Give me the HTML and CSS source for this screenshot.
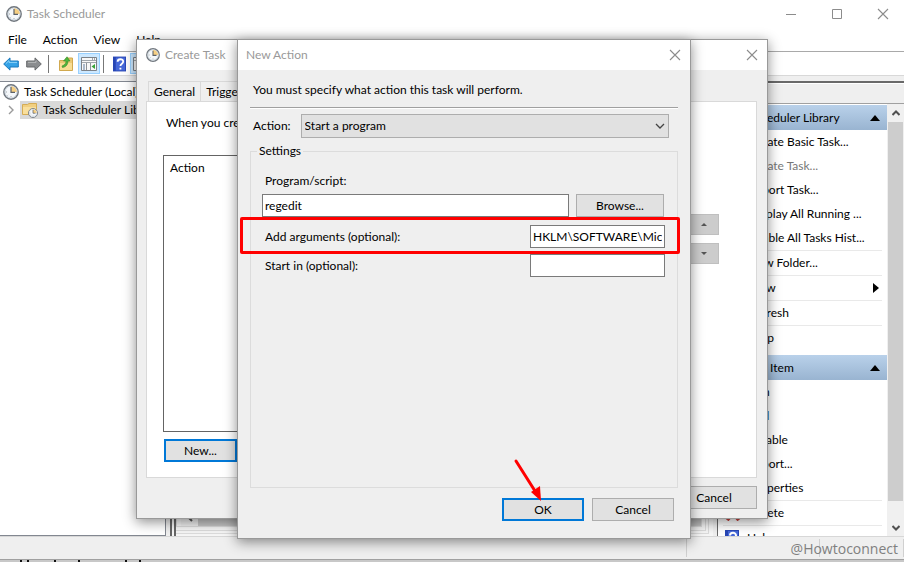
FILE: index.html
```html
<!DOCTYPE html>
<html lang="en">
<head>
    <meta charset="UTF-8">
    <meta name="viewport" content="width=device-width, initial-scale=1.0">
    <title>Task Scheduler</title>
    <link rel="stylesheet" href="styles.css">
</head>
<body>
    <svg class="defs" width="0" height="0" aria-hidden="true">
        <symbol id="clock" viewBox="0 0 16 16">
            <circle cx="8" cy="8" r="7.2" fill="#e4ecf3" stroke="#70767d" stroke-width="1.4"/>
            <circle cx="8" cy="8" r="5.9" fill="#f5f8fb" stroke="#bac5ce" stroke-width=".6"/>
            <path d="M8 8V2.2A5.8 5.8 0 0 1 13.8 8Z" fill="#f6cf83"/>
            <path d="M8 3v5.4h4" fill="none" stroke="#5c6269" stroke-width="1.2"/>
            <path d="M3 8h1M8 12v1M4.5 11.5l.6-.6" stroke="#8d949a" stroke-width=".8"/>
        </symbol>
        <symbol id="close" viewBox="0 0 12 12">
            <path d="M1 1l10 10M11 1L1 11" fill="none" stroke="#8c8c8c" stroke-width="1.1"/>
        </symbol>
        <symbol id="help" viewBox="0 0 14 16">
            <path d="M0 0h14v16H0z" fill="#2846b4"/>
            <path d="M3 1h10v14H3z" fill="#4668d8"/>
            <path d="M5 5.5C5 2 11 2 11 5.4 11 7.8 8 7.6 8 10.2M8 12v2" fill="none" stroke="#fff" stroke-width="2"/>
        </symbol>
    </svg>

    <main class="window">
        <header class="titlebar">
            <svg class="icon16"><use href="#clock"/></svg>
            <h1>Task Scheduler</h1>
            <div class="window-buttons">
                <button aria-label="Minimize"><svg width="12" height="12"><path d="M1 6.5h10" stroke="#8c8c8c"/></svg></button>
                <button aria-label="Maximize"><svg width="12" height="12"><path d="M1.5 1.5h9v9h-9z" fill="none" stroke="#8c8c8c"/></svg></button>
                <button aria-label="Close"><svg width="12" height="12"><use href="#close"/></svg></button>
            </div>
        </header>
        <nav class="menubar">
            <a href="#">File</a>
            <a href="#">Action</a>
            <a href="#">View</a>
            <a href="#">Help</a>
        </nav>
        <div class="toolbar">
            <button aria-label="Back"><svg width="16" height="14"><path d="M.7 7L7 .9V4h8.3v6H7v3.1z" fill="#35a2e6" stroke="#1878bd"/><path d="M3 6.5L6 3.6V5.4h8" fill="none" stroke="#8dd3f8"/></svg></button>
            <button aria-label="Forward"><svg width="16" height="14"><path d="M15.3 7L9 .9V4H.7v6H9v3.1z" fill="#8b8d8f" stroke="#66686a"/><path d="M2 5.4h8V3.6" fill="none" stroke="#b5b7b8"/></svg></button>
            <span class="divider"></span>
            <button aria-label="Up one level"><svg width="16" height="16"><path d="M1.5 4.5h7l1-2.5h5v12.5h-13z" fill="#ecc974" stroke="#d1a94f"/><path d="M2 7h12v7H2z" fill="#f8dd94"/><path d="M4 10C7 9 8 7 8 5H5.5L9 .8 12 5h-2c0 3.5-2 6-5.500 6.500z" fill="#4fb53c" stroke="#358a27" stroke-width=".6"/></svg></button>
            <button class="pressed" aria-label="Show console tree"><svg width="16" height="14"><path d="M.5 .5h15v13H.5z" fill="#f8f8f8" stroke="#7d8288"/><path d="M1 3.500h14M1 5.500h14" stroke="#a1a7ad"/><path d="M11 2h1M13 2h1" stroke="#46505a"/><path d="M5.500 6v7M9.500 6v7" stroke="#8d9298"/><path d="M2 8h2M2 10h2M2 12h2" stroke="#5e7ca0"/><path d="M14 7v5L10.500 9.500z" fill="#36a336"/></svg></button>
            <span class="divider"></span>
            <button aria-label="Help"><svg width="13" height="16"><use href="#help"/></svg></button>
            <button class="pressed" aria-label="Show action pane"><svg width="16" height="14"><path d="M.5 .5h15v13H.5z" fill="#f8f8f8" stroke="#7d8288"/><path d="M1 3.500h14" stroke="#a1a7ad"/></svg></button>
        </div>

        <div class="panes">
            <section class="tree">
                <div class="tree-row"><svg class="icon16"><use href="#clock"/></svg><span>Task Scheduler (Local)</span></div>
                <div class="tree-row child">
                    <svg class="chevron" width="6" height="10"><path d="M1 1l4 4-4 4" fill="none" stroke="#9a9a9a" stroke-width="1.4"/></svg>
                    <div class="selected">
                        <svg width="16" height="16"><path d="M.5 2.500h5l1.500-1h7.500v11H.5z" fill="#f1cf80" stroke="#d5ac55"/><path d="M1 5h13v7H1z" fill="#f9df9c"/><svg x="6" y="6" width="10" height="10"><use href="#clock"/></svg></svg>
                        <span>Task Scheduler Library</span>
                    </div>
                </div>
            </section>

            <section class="results">
                <div class="results-frame">
                    <div class="results-inner">
                        <div class="hscroll">
                            <button aria-label="Scroll left"><svg width="8" height="10"><path d="M6 1L2 5l4 4" fill="none" stroke="#555" stroke-width="2"/></svg></button>
                            <span class="hthumb"></span>
                        </div>
                    </div>
                </div>
            </section>

            <aside class="actions">
                <div class="actions-title"></div>
                <div class="actions-body">
                    <div class="actions-list">
                        <h2>Task Scheduler Library <svg width="10" height="6"><path d="M0 6l5-6 5 6z"/></svg></h2>
                        <a href="#">Create Basic Task...</a>
                        <a href="#" class="disabled">Create Task...</a>
                        <a href="#">Import Task...</a>
                        <a href="#">Display All Running ...</a>
                        <a href="#">Enable All Tasks Hist...</a>
                        <a href="#" class="split">New Folder...</a>
                        <a href="#" class="split">View <svg width="6" height="10"><path d="M0 0l6 5-6 5z"/></svg></a>
                        <a href="#" class="split">Refresh</a>
                        <a href="#" class="split">Help</a>
                        <h2 class="second">Selected Item <svg width="10" height="6"><path d="M0 6l5-6 5 6z"/></svg></h2>
                        <a href="#">Run</a>
                        <a href="#">End</a>
                        <a href="#">Disable</a>
                        <a href="#">Export...</a>
                        <a href="#">Properties</a>
                        <a href="#" class="split with-icon"><svg width="16" height="16"><path d="M2 1l12 14M14 1L2 15" stroke="#c8403c" stroke-width="4"/></svg>Delete</a>
                        <a href="#" class="split with-icon"><svg width="14" height="16"><use href="#help"/></svg>Help</a>
                    </div>
                    <div class="vscroll">
                        <button aria-label="Scroll up"><svg width="8" height="6"><path d="M.5 5L4 1.500 7.500 5" fill="none" stroke="#505050" stroke-width="2"/></svg></button>
                        <span class="vthumb"></span>
                        <button class="down" aria-label="Scroll down"><svg width="8" height="6"><path d="M.5 1L4 4.500 7.500 1" fill="none" stroke="#505050" stroke-width="2"/></svg></button>
                    </div>
                </div>
            </aside>
        </div>

        <footer class="statusbar">
            <span class="cell main-cell"></span>
            <span class="cell"></span>
            <span class="cell last"></span>
            <span class="watermark">@Howtoconnect</span>
        </footer>
        <svg class="page-edge" height="2"><path d="M20 1h2M27 1h2M54 1h2M78 1h2M125 1h2M139 1h2" stroke="#111" stroke-width="2"/></svg>
    </main>

    <section class="dialog create-task">
        <header class="titlebar">
            <svg class="icon14"><use href="#clock"/></svg>
            <h1>Create Task</h1>
            <button aria-label="Close"><svg width="12" height="12"><use href="#close"/></svg></button>
        </header>
        <div class="tabs">
            <button class="tab">General</button>
            <button class="tab">Triggers</button>
            <button class="tab active">Actions</button>
        </div>
        <div class="tab-page">
            <p>When you create a task, you must specify the action that will occur when your task starts.</p>
            <div class="list-row">
                <div class="action-list">Action</div>
                <div class="order">
                    <button disabled aria-label="Move up"><svg width="6" height="3"><path d="M0 3l3-3 3 3z"/></svg></button>
                    <button disabled aria-label="Move down"><svg width="6" height="3"><path d="M0 0l3 3 3-3z"/></svg></button>
                </div>
            </div>
            <button class="btn default new">New...</button>
        </div>
        <div class="dialog-buttons">
            <button class="btn">Cancel</button>
        </div>
    </section>

    <section class="dialog new-action">
        <header class="titlebar">
            <h1>New Action</h1>
            <button aria-label="Close"><svg width="12" height="12"><use href="#close"/></svg></button>
        </header>
        <form class="form">
            <p>You must specify what action this task will perform.</p>
            <hr>
            <div class="action-row">
                <label for="action">Action:</label>
                <div class="select-wrap">
                    <select id="action">
                        <option>Start a program</option>
                    </select>
                    <svg width="10" height="6"><path d="M1 1l4 4 4-4" fill="none" stroke="#444" stroke-width="1.300"/></svg>
                </div>
            </div>
            <fieldset>
                <legend>Settings</legend>
                <label for="program">Program/script:</label>
                <div class="program-row">
                    <input type="text" id="program" value="regedit">
                    <button type="button" class="btn">Browse...</button>
                </div>
                <div class="field">
                    <label for="args">Add arguments (optional):</label>
                    <input type="text" id="args" value="HKLM\SOFTWARE\Microsoft">
                </div>
                <div class="field">
                    <label for="startin">Start in (optional):</label>
                    <input type="text" id="startin">
                </div>
            </fieldset>
            <div class="dialog-buttons">
                <button type="button" class="btn default">OK</button>
                <button type="button" class="btn">Cancel</button>
            </div>
        </form>
        <div class="highlight"></div>
        <svg class="arrow" width="32" height="46"><path d="M3 4l19 30" stroke="#f00" stroke-width="3" stroke-linecap="round"/><path d="M28 44l-10-9 9-6z" fill="#f00"/></svg>
    </section>
</body>
</html>
```
FILE: styles.css
```css
* {
    box-sizing: border-box;
}
body {
    margin: 0;
    height: 100vh;
    overflow: hidden;
    font: 12px/16px Lato, "Open Sans", sans-serif;
    color: #000;
    background: #fff;
}
h1, h2, p {
    margin: 0;
    font-size: 12px;
    font-weight: normal;
}
button, input, select {
    font: inherit;
    color: inherit;
}
button {
    padding: 0;
    border: 0;
    background: none;
}
a {
    color: inherit;
    text-decoration: none;
}
svg {
    flex: none;
}
.defs {
    position: absolute;
}
.icon16 {
    width: 16px;
    height: 16px;
}
.icon14 {
    width: 14px;
    height: 14px;
}

/* main window */
.window {
    display: flex;
    flex-direction: column;
    height: 100%;
    background: #efefef;
}
.titlebar {
    display: flex;
    align-items: center;
    flex: none;
    height: 28px;
    gap: 5px;
    padding: 0 6px;
    background: #fff;
}
.titlebar h1 {
    color: #999;
}
.titlebar button {
    display: flex;
    margin-left: auto;
}
.window-buttons {
    display: flex;
    gap: 34px;
    margin-left: auto;
    padding-right: 9px;
}
.menubar {
    display: flex;
    align-items: center;
    flex: none;
    height: 23px;
    gap: 16px;
    padding-left: 8px;
    background: #fff;
}
.toolbar {
    display: flex;
    align-items: center;
    flex: none;
    height: 25px;
    padding-left: 3px;
    background: #fff;
    border-top: 1px solid #a9a9a9;
    border-bottom: 1px solid #d8d8d8;
}
.toolbar button {
    display: flex;
    margin-right: 7px;
}
.toolbar .divider {
    width: 1px;
    height: 18px;
    margin-left: -1px;
    margin-right: 9px;
    background: #777;
}
.toolbar .pressed {
    height: 21px;
    margin-left: -3px;
    margin-right: 4px;
    padding: 3px 2px;
    border: 1px solid #99d1ff;
    background: #cce8ff;
}
.panes {
    display: flex;
    flex: 1;
    min-height: 0;
    gap: 4px;
    margin-top: 5px;
}
.tree {
    width: 166px;
    padding-top: 1px;
    background: #fff;
    border: 1px solid #828790;
    border-left: 0;
    overflow: hidden;
    white-space: nowrap;
}
.tree-row {
    display: flex;
    align-items: center;
    height: 18px;
    gap: 5px;
    padding-left: 3px;
}
.tree-row.child {
    gap: 12px;
    padding-left: 8px;
}
.tree-row .selected {
    display: flex;
    align-items: center;
    height: 18px;
    gap: 5px;
    padding: 0 2px;
    margin-left: -6px;
    background: #d9d9d9;
}
.results {
    flex: 1;
    padding: 0 4px 2px 0;
    border-left: 6px double #666;
    border-top: 2px solid #666;
    background: #f6f6f6;
}
.results-frame {
    height: 100%;
    padding: 0 3px 3px 0;
    border: 4px double #dcdcdc;
    border-left: 0;
}
.results-inner {
    display: flex;
    align-items: flex-end;
    height: 100%;
    padding-left: 4px;
    border: 1px solid #dcdcdc;
}
.hscroll {
    display: flex;
    width: 100%;
    height: 17px;
    background: #f0f0f0;
}
.hscroll button {
    width: 17px;
}
.hthumb {
    flex: 1;
    background: #c8c8c8;
}
.actions {
    display: flex;
    flex-direction: column;
    width: 187px;
    border-top: 2px solid #696969;
    border-left: 1px solid #696969;
}
.actions-title {
    flex: none;
    height: 21px;
    border-top: 1px solid #fff;
    border-bottom: 1px solid #a0a0a0;
}
.actions-body {
    display: flex;
    flex: 1;
    min-height: 0;
    background: #fff;
}
.actions-list {
    flex: 1;
    padding-top: 1px;
    overflow: hidden;
    white-space: nowrap;
}
.actions-list h2, .actions-list a {
    display: flex;
    align-items: center;
    justify-content: space-between;
}
.actions-list h2 {
    height: 25px;
    padding: 0 7px 0 4px;
    background: linear-gradient(#b9d1ea, #99b4d1);
}
.actions-list h2.second {
    margin-top: 5px;
}
.actions-list a {
    height: 24px;
    margin: 0 5px;
    padding: 0 3px 0 26px;
}
.actions-list .split {
    height: 25px;
    border-top: 1px solid #e9e9e9;
}
.actions-list .with-icon {
    justify-content: flex-start;
    gap: 8px;
    padding-left: 2px;
}
.actions-list .disabled {
    color: #777;
}
.vscroll {
    display: flex;
    flex-direction: column;
    width: 17px;
    padding: 0 1px;
    background: #f0f0f0;
}
.vscroll button {
    display: flex;
    align-items: center;
    justify-content: center;
    height: 18px;
}
.vthumb {
    flex: 1;
    background: #cdcdcd;
}
.vscroll .down {
    height: 17px;
    margin-top: 18px;
}
.statusbar {
    position: relative;
    display: flex;
    flex: none;
    height: 24px;
    padding: 2px 0;
    border-top: 1px solid #d7d7d7;
    border-bottom: 1px solid #a0a0a0;
}
.cell {
    width: 133px;
    border-right: 1px solid #d0d0d0;
}
.main-cell {
    flex: 1;
}
.cell.last {
    width: 84px;
}
.watermark {
    position: absolute;
    right: 6px;
    top: 4px;
    font-family: "Open Sans", sans-serif;
    font-size: 14px;
    color: #808080;
}
.page-edge {
    width: 100%;
    background: #c8c8c8;
}

/* dialogs */
.dialog {
    position: absolute;
    display: flex;
    flex-direction: column;
    background: #efefef;
    border: 1px solid #999;
    box-shadow: 0 3px 12px rgba(0, 0, 0, 0.45);
}
.dialog .titlebar {
    height: 30px;
    padding: 0 9px;
}
.btn {
    width: 82px;
    height: 23px;
    background: #e1e1e1;
    border: 1px solid #adadad;
}
.btn.default {
    border: 2px solid #0078d7;
}
.dialog-buttons {
    display: flex;
    justify-content: flex-end;
    gap: 8px;
}
.create-task {
    left: 136px;
    top: 39px;
    width: 632px;
    height: 480px;
    padding-bottom: 9px;
}
.tabs {
    display: flex;
    margin: 11px 11px 0;
}
.tab {
    height: 20px;
    padding: 0 5px;
    border: 1px solid #d9d9d9;
    border-right: 0;
    border-bottom: 0;
}
.tab.active {
    background: #fff;
}
.tab-page {
    display: flex;
    flex-direction: column;
    flex: 1;
    margin: 0 10px 8px 9px;
    padding: 13px 37px 15px 16px;
    background: #fff;
    border: 1px solid #d9d9d9;
}
.tab-page p {
    padding-left: 3px;
}
.list-row {
    display: flex;
    flex: 1;
    gap: 4px;
    margin: 24px 0 7px;
}
.action-list {
    flex: 1;
    padding: 4px 6px;
    border: 1px solid #646464;
}
.order {
    display: flex;
    flex-direction: column;
    gap: 8px;
    padding-top: 59px;
}
.order button {
    display: flex;
    align-items: center;
    justify-content: center;
    width: 30px;
    height: 21px;
    background: #ccc;
    border: 1px solid #bfbfbf;
}
.order svg {
    fill: #555;
}
.btn.new {
    width: 73px;
    margin-left: 1px;
}
.create-task .dialog-buttons {
    padding-right: 10px;
}
.create-task .dialog-buttons .btn {
    width: 86px;
}
.new-action {
    left: 237px;
    top: 39px;
    width: 454px;
    height: 500px;
}
.new-action .titlebar {
    padding-left: 8px;
}
.form {
    display: flex;
    flex-direction: column;
    flex: 1;
    padding: 12px 12px 17px;
}
.form p {
    padding-left: 3px;
}
.form hr {
    width: 100%;
    height: 2px;
    margin: 9px 0 5px;
    border: 0;
    border-top: 1px solid #a0a0a0;
    border-bottom: 1px solid #fff;
}
.action-row {
    display: flex;
    align-items: center;
    gap: 10px;
    padding: 0 9px 0 3px;
}
.select-wrap {
    position: relative;
    display: flex;
    flex: 1;
}
.select-wrap select {
    width: 100%;
    height: 24px;
    padding: 0 3px;
    appearance: none;
    background: #e1e1e1;
    border: 1px solid #adadad;
    border-radius: 0;
}
.select-wrap svg {
    position: absolute;
    right: 4px;
    top: 9px;
    pointer-events: none;
}
fieldset {
    flex: 1;
    min-width: 0;
    margin: 5px 0 10px;
    padding: 14px 12px 0 11px;
    border: 1px solid #dcdcdc;
}
legend {
    margin-left: -5px;
    padding: 0 2px;
}
fieldset label {
    padding-left: 3px;
}
.program-row {
    display: flex;
    gap: 7px;
    margin: 5px 0 8px;
    padding-right: 1px;
}
.program-row .btn {
    width: 88px;
}
input {
    height: 23px;
    padding: 0 2px;
    background: #fff;
    border: 1px solid #7a7a7a;
}
.program-row input {
    flex: 1;
    min-width: 0;
}
.field {
    display: flex;
    align-items: center;
    justify-content: space-between;
    margin-bottom: 6px;
}
.field input {
    width: 135px;
}
.form .dialog-buttons {
    padding-right: 4px;
}
.highlight {
    position: absolute;
    left: 2px;
    top: 177px;
    width: 440px;
    height: 37px;
    border: 3px solid #f00;
    border-radius: 2px;
}
.arrow {
    position: absolute;
    left: 275px;
    top: 417px;
}
```
